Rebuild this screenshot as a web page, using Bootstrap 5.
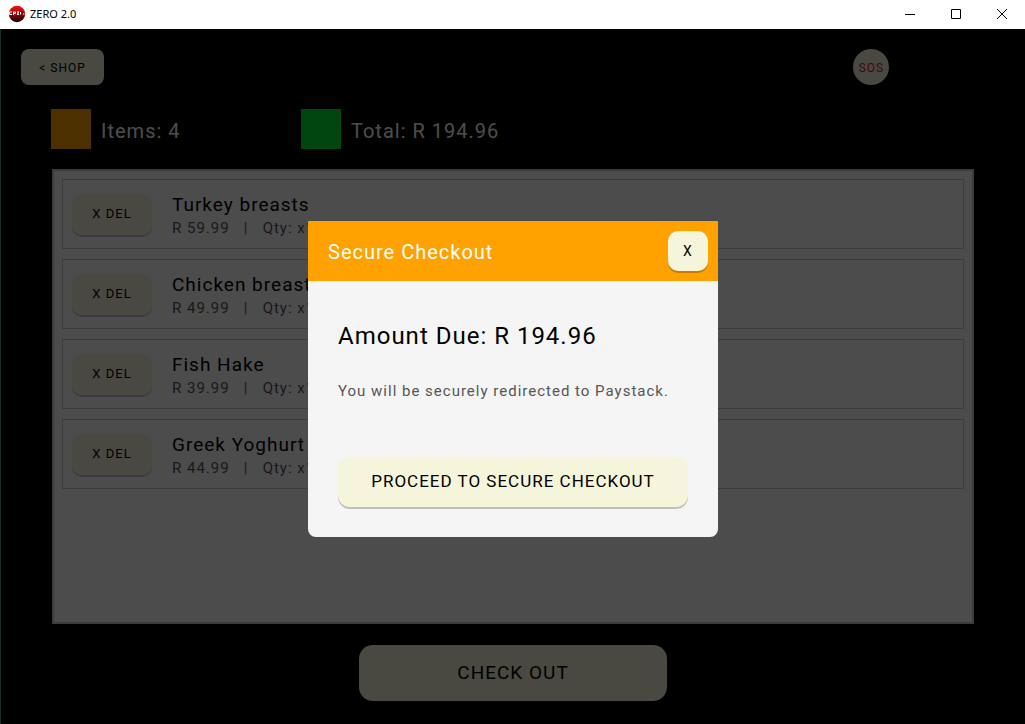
<!DOCTYPE html>
<html lang="en">
<head>
<meta charset="utf-8">
<meta name="viewport" content="width=device-width, initial-scale=1">
<title>ZERO 2.0</title>
<link rel="stylesheet" href="https://cdn.jsdelivr.net/npm/bootstrap@5.3.0/dist/css/bootstrap.min.css">
<style>
  body { font-family: Roboto, "Liberation Sans", sans-serif; letter-spacing: 1px; background: #000; }
  .titlebar { height: 29px; padding-bottom: 2px; background: #fff; color: #000; letter-spacing: 0; }
  .titlebar-name { font: 12px/16px "Noto Sans", "Open Sans", sans-serif; font-size: 11px; letter-spacing: 0; }
  .win-btn { width: 46px; height: 27px; padding: 0; border: 0; background: none; display: flex; align-items: center; justify-content: center; }
  .shop-app { border-left: 1px solid #1c2a20; background: #000; }
  .beige { --bs-btn-bg: #f5f5dc; --bs-btn-color: #000; --bs-btn-border-width: 0px; --bs-btn-hover-bg: #ebebcd; --bs-btn-hover-color: #000; letter-spacing: 1px; }
  .raised { box-shadow: 0 2px 0 rgba(0, 0, 0, .22); }
  .topbar { padding: 20px 136px 0 20px; height: 80px; }
  .shop-btn { width: 83px; height: 36px; font-size: 12px; padding: 1px 0 0; border-radius: 8px; }
  .sos-btn { width: 36px; height: 36px; font-size: 12px; padding: 1px 0 0 1px; --bs-btn-color: #dc143c; }
  .stats { padding-left: 50px; height: 40px; font-size: 20px; color: #fff; }
  .stat { width: 250px; gap: 10px; white-space: nowrap; }
  .stat-text { padding-top: 4px; }
  .swatch { width: 40px; height: 40px; flex: none; }
  .swatch-items { background: #ffa200; }
  .swatch-total { background: #00e436; }
  .cart { margin: 20px 51px 0; padding: 8px; border: 2px solid #c8c8c8; background: #fff; gap: 10px; list-style: none; }
  .cart-item { height: 70px; padding: 0 9px; border: 1px solid #c8c8c8; gap: 20px; }
  .item-text { padding-top: 4px; }
  .del-btn { width: 80px; height: 41px; font-size: 13px; padding: 0; border-radius: 10px; }
  .item-name { font-size: 19px; line-height: 24px; color: #000; }
  .item-info { font-size: 15px; line-height: 22px; color: #555; white-space: pre; }
  .pay-area { padding: 21px 0 23px; }
  .checkout-btn { width: 30%; height: 56px; font-size: 19px; padding: 0; border-radius: 14px; }
  .shade { position: absolute; inset: 0; padding-top: 4px; background: rgba(0, 0, 0, .7); }
  .pay-dialog { width: 410px; max-width: 100%; border: 0; border-radius: 2px 2px 8px 8px; overflow: hidden; background: #f5f5f5; color: #000; }
  .pay-head { height: 60px; padding: 0 10px 0 20px; background: #ffa200; color: #fff; }
  .pay-title { font-size: 20px; font-weight: 400; padding-top: 3px; }
  .close-btn { width: 40px; height: 40px; font-size: 14px; padding: 1px 0 0; border-radius: 10px; }
  .pay-body { padding: 37px 30px 30px; }
  .amount { font-size: 24px; line-height: 36px; margin-bottom: 25px; }
  .note { font-size: 15px; line-height: 24px; margin-bottom: 54px; color: #555; white-space: nowrap; }
  .proceed-btn { height: 50px; font-size: 17px; padding: 0; border-radius: 12px; }
</style>
</head>
<body class="vh-100 d-flex flex-column overflow-hidden">
  <header class="titlebar d-flex align-items-center flex-shrink-0">
    <svg class="ms-2 me-1" width="18" height="18" viewBox="0 0 18 18" aria-hidden="true">
      <defs><linearGradient id="ball" x1="0" y1="0" x2="0" y2="1"><stop offset="0" stop-color="#ff1010"/><stop offset=".45" stop-color="#a00808"/><stop offset="1" stop-color="#100000"/></linearGradient></defs>
      <circle cx="9" cy="9" r="8.2" fill="url(#ball)"/>
      <path d="M4 7H1.500V9.500H4M5.500 10V7H7.500V8.500H5.500M9 7H11L9.500 8.500 11 9.500H9M12.500 7V9.500M15 9H16.500" fill="none" stroke="#fff" stroke-width="1"/>
    </svg>
    <span class="titlebar-name flex-grow-1">ZERO 2.0</span>
    <button class="win-btn" type="button" aria-label="Minimize"><svg width="10" height="10" stroke="#000"><path d="M0 5.500H10"/></svg></button>
    <button class="win-btn" type="button" aria-label="Maximize"><svg width="10" height="10" fill="none" stroke="#000"><path d="M.5.5H9.500V9.500H.5Z"/></svg></button>
    <button class="win-btn" type="button" aria-label="Close window"><svg width="10" height="10" stroke="#000"><path d="M0 0 10 10M10 0 0 10"/></svg></button>
  </header>

  <main class="shop-app position-relative flex-grow-1 d-flex flex-column">
    <nav class="topbar d-flex justify-content-between align-items-start">
      <button class="btn beige shop-btn" type="button">&lt; SHOP</button>
      <button class="btn beige sos-btn rounded-circle d-flex align-items-center justify-content-center" type="button">SOS</button>
    </nav>
    <div class="stats d-flex">
      <div class="stat d-flex align-items-center"><span class="swatch swatch-items"></span><span class="stat-text">Items: 4</span></div>
      <div class="stat d-flex align-items-center"><span class="swatch swatch-total"></span><span class="stat-text">Total: R 194.96</span></div>
    </div>
    <ul class="cart d-flex flex-column flex-grow-1">
      <li class="cart-item d-flex align-items-center">
        <button class="btn beige raised del-btn" type="button">X DEL</button>
        <div class="item-text"><div class="item-name">Turkey breasts</div><div class="item-info">R 59.99   |   Qty: x1</div></div>
      </li>
      <li class="cart-item d-flex align-items-center">
        <button class="btn beige raised del-btn" type="button">X DEL</button>
        <div class="item-text"><div class="item-name">Chicken breasts</div><div class="item-info">R 49.99   |   Qty: x1</div></div>
      </li>
      <li class="cart-item d-flex align-items-center">
        <button class="btn beige raised del-btn" type="button">X DEL</button>
        <div class="item-text"><div class="item-name">Fish Hake</div><div class="item-info">R 39.99   |   Qty: x1</div></div>
      </li>
      <li class="cart-item d-flex align-items-center">
        <button class="btn beige raised del-btn" type="button">X DEL</button>
        <div class="item-text"><div class="item-name">Greek Yoghurt</div><div class="item-info">R 44.99   |   Qty: x1</div></div>
      </li>
    </ul>
    <div class="pay-area text-center">
      <button class="btn beige checkout-btn" type="button">CHECK OUT</button>
    </div>

    <div class="shade d-flex align-items-center justify-content-center">
      <section class="modal-content pay-dialog" role="dialog" aria-labelledby="pay-title">
        <div class="pay-head d-flex align-items-center justify-content-between">
          <h1 class="pay-title mb-0" id="pay-title">Secure Checkout</h1>
          <button class="btn beige raised close-btn" type="button">X</button>
        </div>
        <div class="pay-body">
          <p class="amount">Amount Due: R 194.96</p>
          <p class="note">You will be securely redirected to Paystack.</p>
          <button class="btn beige raised proceed-btn w-100" type="button">PROCEED TO SECURE CHECKOUT</button>
        </div>
      </section>
    </div>
  </main>
<script src="https://cdn.jsdelivr.net/npm/bootstrap@5.3.0/dist/js/bootstrap.bundle.min.js"></script>
</body>
</html>
